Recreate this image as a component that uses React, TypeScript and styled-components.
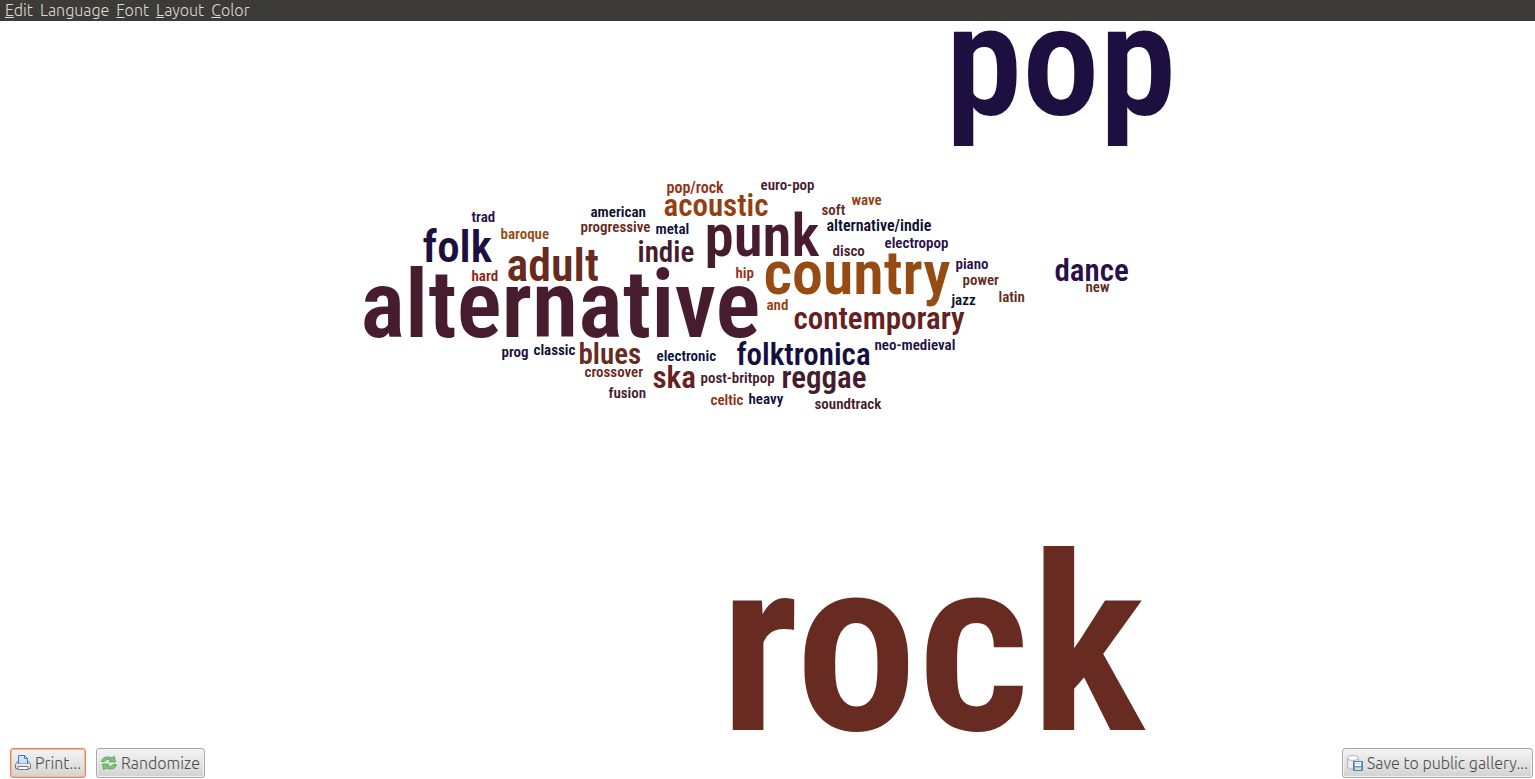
import React from "react";
import styled, { createGlobalStyle } from "styled-components";

const GlobalStyle = createGlobalStyle`
  * { box-sizing: border-box; }
  body { margin: 0; background: #fff; }
`;

const Page = styled.div`
  display: flex;
  flex-direction: column;
  min-height: 100vh;
  overflow: hidden;
  font-family: Ubuntu, "Noto Sans", sans-serif;
  font-weight: 300;
  font-size: 16px;
`;

const MenuBar = styled.nav`
  display: flex;
  align-items: flex-start;
  gap: 7px;
  height: 21px;
  padding: 0 5px;
  background: #3c3b37;
`;

const MenuButton = styled.button`
  border: 0;
  padding: 0;
  background: none;
  color: #dfdbd2;
  font: inherit;
  line-height: 21px;
`;

const Cloud = styled.main`
  position: relative;
  flex: 1;
  min-height: 719px;
`;

/* Words are anchored by their left edge and baseline, relative to the cloud's centre line. */
const Word = styled.span<{ $x: number; $y: number; $size: number; $color: string }>`
  position: absolute;
  left: calc(50% + ${(p) => p.$x - 767}px);
  top: ${(p) => p.$y - 21 - Math.floor(p.$size * 0.842)}px;
  font-family: "Roboto Condensed", "Liberation Sans Narrow", "Arial Narrow", sans-serif;
  font-weight: 600;
  font-size: ${(p) => p.$size}px;
  line-height: 1;
  white-space: nowrap;
  color: ${(p) => p.$color};
`;

const Footer = styled.footer`
  display: flex;
  gap: 10px;
  padding: 0 2px 1px 10px;
`;

const Button = styled.button<{ $focused?: boolean; $end?: boolean }>`
  display: flex;
  align-items: center;
  gap: 4px;
  height: 30px;
  margin-left: ${(p) => (p.$end ? "auto" : "0")};
  padding: 0 4px;
  border: 1px solid ${(p) => (p.$focused ? "#ee8258" : "#a9a8a7")};
  border-radius: 3px;
  background: linear-gradient(#f4f4f4, #e4e4e4 50%, #d2d2d2);
  box-shadow: inset 0 0 0 1px ${(p) => (p.$focused ? "#f3b79f" : "#f2f2f2")};
  color: #4c4c4c;
  font: inherit;
  white-space: nowrap;
`;

type Entry = [text: string, x: number, baseline: number, size: number, color: string];

const words: Entry[] = [
  ["pop", 945, 114, 155, "#1d0f40"],
  ["rock", 719, 730, 245, "#672b21"],
  ["alternative", 360, 337, 94, "#481c2f"],
  ["country", 763, 294, 62, "#964b13"],
  ["punk", 704, 255, 59, "#481c2f"],
  ["folk", 422, 261, 45, "#1d0f40"],
  ["adult", 506, 280, 46, "#672b21"],
  ["indie", 637, 262, 29, "#481c2f"],
  ["acoustic", 663, 216, 31, "#963e13"],
  ["dance", 1054, 281, 31, "#2a1048"],
  ["contemporary", 793, 329, 31, "#671f21"],
  ["folktronica", 736, 365, 31, "#150f40"],
  ["reggae", 781, 388, 31, "#481c2f"],
  ["blues", 578, 364, 29, "#672b21"],
  ["ska", 652, 388, 31, "#671f21"],
  ["pop/rock", 666, 193, 16, "#963013"],
  ["euro-pop", 760, 190, 15, "#481c2f"],
  ["wave", 851, 205, 15, "#963e13"],
  ["soft", 821, 215, 15, "#672b21"],
  ["trad", 471, 222, 15, "#2a1048"],
  ["american", 590, 217, 15, "#0c0f2c"],
  ["progressive", 580, 232, 15, "#672b21"],
  ["metal", 655, 234, 15, "#0c0f40"],
  ["baroque", 500, 239, 15, "#964b13"],
  ["alternative/indie", 826, 231, 16, "#0c0f2c"],
  ["electropop", 884, 248, 15, "#2a1048"],
  ["disco", 832, 256, 15, "#481c2f"],
  ["hard", 471, 281, 15, "#8e1f13"],
  ["hip", 735, 278, 15, "#963013"],
  ["piano", 955, 269, 15, "#2a1048"],
  ["power", 962, 285, 15, "#672b21"],
  ["new", 1085, 292, 15, "#672b21"],
  ["latin", 998, 302, 15, "#672b21"],
  ["jazz", 951, 305, 15, "#0c0f2c"],
  ["and", 766, 310, 15, "#963e13"],
  ["neo-medieval", 874, 350, 15, "#1d0f40"],
  ["prog", 501, 357, 15, "#1d0f40"],
  ["classic", 533, 355, 15, "#0c0f2c"],
  ["electronic", 656, 361, 15, "#0c0f40"],
  ["crossover", 584, 377, 15, "#672b21"],
  ["post-britpop", 700, 383, 15, "#481c2f"],
  ["fusion", 608, 398, 15, "#481c2f"],
  ["celtic", 710, 405, 15, "#963013"],
  ["heavy", 748, 404, 15, "#150f40"],
  ["soundtrack", 814, 409, 15, "#481c2f"],
];

const menus: [string, string, string][] = [
  ["", "E", "dit"],
  ["Lan", "g", "uage"],
  ["", "F", "ont"],
  ["", "L", "ayout"],
  ["", "C", "olor"],
];

const PrinterIcon = () => (
  <svg width="16" height="16" viewBox="0 0 16 16" aria-hidden="true">
    <path d="M2.500 6.500h11l2 3v3.500q0 .5-.5.5H1q-.5 0-.5-.5V9.500z" fill="#dcdcdc" stroke="#77797a" />
    <path d="M3.500 9V.5h6l3 3V9z" fill="#cfe2f6" stroke="#4a7ab5" />
    <path d="M9.500.5v3h3z" fill="#fff" stroke="#4a7ab5" strokeLinejoin="round" />
    <path d="M1.500 9.500h13" stroke="#f6f6f6" />
    <path d="M3.500 11.500h9l1 3h-11z" fill="#fff" stroke="#77797a" />
  </svg>
);

const RefreshIcon = () => (
  <svg width="16" height="16" viewBox="0 0 16 16" aria-hidden="true" strokeLinejoin="round">
    <path d="M.6 6.500C1 2.500 6 .8 11 3L13.300 1.300 14.500 7 8 6.700 9.800 5.200C7 4 4.500 4.500 3.800 6.500z" fill="#7fc67a" stroke="#4f9a4b" strokeWidth=".8" />
    <path d="M15.400 9.500c-.4 4-5.400 5.700-10.400 3.500L2.700 14.700 1.500 9 8 9.300 6.200 10.800C9 12 11.500 11.500 12.200 9.500z" fill="#7fc67a" stroke="#4f9a4b" strokeWidth=".8" />
  </svg>
);

const SaveIcon = () => (
  <svg width="16" height="16" viewBox="0 0 16 16" aria-hidden="true">
    <path d="M.5 3v9c0 2.800 11 2.800 11 0V3z" fill="#ececec" stroke="#b4b4b4" />
    <ellipse cx="6" cy="3" rx="5.500" ry="2.500" fill="#fbfbfb" stroke="#b4b4b4" />
    <path d="M6.500 6.500h9v9h-9z" fill="#6f9bdc" stroke="#4f7cc4" />
    <path d="M8 7h6v4H8z" fill="#fff" />
    <path d="M9 8.500h4" stroke="#b9c9e2" />
    <path d="M8 12.500h6v2.500H8z" fill="#cfe8a6" />
  </svg>
);

export default function App() {
  return (
    <Page>
      <GlobalStyle />
      <MenuBar>
        {menus.map(([before, key, after]) => (
          <MenuButton key={before + key + after}>
            {before}
            <u>{key}</u>
            {after}
          </MenuButton>
        ))}
      </MenuBar>
      <Cloud>
        {words.map(([text, x, baseline, size, color]) => (
          <Word key={text} $x={x} $y={baseline} $size={size} $color={color}>
            {text}
          </Word>
        ))}
      </Cloud>
      <Footer>
        <Button $focused>
          <PrinterIcon />
          Print...
        </Button>
        <Button>
          <RefreshIcon />
          Randomize
        </Button>
        <Button $end>
          <SaveIcon />
          Save to public gallery...
        </Button>
      </Footer>
    </Page>
  );
}
